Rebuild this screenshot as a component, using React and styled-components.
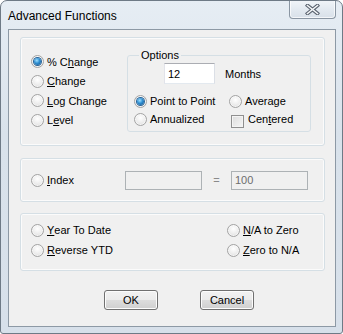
import React from 'react';
import styled, { createGlobalStyle } from 'styled-components';

const GlobalStyle = createGlobalStyle`
  html, body {
    margin: 0;
    padding: 0;
    background: #ffffff;
  }
  * {
    box-sizing: border-box;
  }
`;

const Window = styled.div`
  width: 343px;
  height: 334px;
  display: flex;
  flex-direction: column;
  border: 1px solid #6e7a86;
  border-radius: 7px 7px 3px 3px;
  background: linear-gradient(#e6edf4, #d9e2eb 40%, #d7e0ea);
  font-family: "Liberation Sans", Arial, sans-serif;
  font-size: 11px;
  color: #000;
  overflow: hidden;
`;

const TitleBar = styled.div`
  height: 28px;
  display: flex;
  align-items: flex-start;
  justify-content: space-between;
  padding-right: 6px;
`;

const Title = styled.div`
  font-family: "Liberation Sans", Arial, sans-serif;
  font-size: 12px;
  line-height: 14px;
  padding: 8px 0 0 7px;
  color: #000;
`;

const CloseButton = styled.div`
  width: 47px;
  height: 19px;
  margin-top: -1px;
  display: flex;
  align-items: center;
  justify-content: center;
  border: 1px solid #8a96a3;
  border-top: none;
  border-radius: 0 0 4px 4px;
  background: linear-gradient(#f1f5f9, #e2e9f0 55%, #d8e0e9);
  box-shadow: inset 0 0 0 1px rgba(255, 255, 255, 0.7);
`;

const Client = styled.div`
  flex: 1;
  margin: 0 6px 6px 7px;
  border: 1px solid #8d99a5;
  background: #f0f0f0;
  padding: 7px 10px 0 11px;
  display: flex;
  flex-direction: column;
`;

const Group = styled.div`
  height: ${(p) => p.$h}px;
  margin-top: ${(p) => p.$mt || 0}px;
  border: 1px solid #d5dfe5;
  border-radius: 3px;
  box-shadow: inset 0 0 0 1px #fbfbfb;
`;

const MainGroup = styled(Group)`
  display: flex;
  align-items: flex-start;
  padding: 0 13px 0 10px;
`;

const RadioColumn = styled.div`
  display: flex;
  flex-direction: column;
  padding-top: 14px;
`;

const Row = styled.label`
  display: flex;
  align-items: center;
  height: ${(p) => p.$h || 19.5}px;
  white-space: nowrap;
`;

const Radio = styled.span`
  position: relative;
  width: 13px;
  height: 13px;
  flex: none;
  border-radius: 50%;
  border: 1px solid #a3a3a3;
  background: radial-gradient(circle at 50% 35%, #ffffff, #eeeeee 50%, #d6d6d6 100%);
  box-shadow: inset 0 0 0 1px rgba(255, 255, 255, 0.6);
  margin-right: 3px;

  &::after {
    content: '';
    display: ${(p) => (p.$checked ? 'block' : 'none')};
    position: absolute;
    left: 2px;
    top: 2px;
    width: 7px;
    height: 7px;
    border-radius: 50%;
    background: radial-gradient(circle at 40% 35%, #9fe0ff, #2f8fd2 45%, #0e4d88 100%);
    box-shadow: 0 0 0 1px #2a6497;
  }
`;

const Check = styled.span`
  width: 13px;
  height: 13px;
  flex: none;
  border: 1px solid #8f8f8f;
  background: linear-gradient(135deg, #dcdcdc, #f6f6f6);
  box-shadow: inset 0 0 0 1px #f4f4f4;
  margin: 4px 4px 0 2px;
`;

const Options = styled.fieldset`
  width: 184px;
  height: 84px;
  margin: 10px 0 0 auto;
  padding: 1px 6px 0 6px;
  border: 1px solid #d5dfe5;
  border-radius: 3px;
  min-width: 0;
`;

const Legend = styled.legend`
  padding: 0 2px;
  margin-left: 5px;
  line-height: 14px;
  font-size: 11px;
`;

const MonthsRow = styled.div`
  display: flex;
  align-items: center;
  padding-left: 30px;
  height: 21px;
  margin-bottom: 8px;
`;

const TextBox = styled.div`
  width: ${(p) => p.$w}px;
  height: ${(p) => p.$ht}px;
  display: flex;
  align-items: center;
  padding-left: 3px;
  border: 1px solid #abadb3;
  border-color: #abadb3 #dbdfe6 #e3e9ef #e2e3ea;
  background: ${(p) => (p.$disabled ? '#f0f0f0' : '#ffffff')};
  color: ${(p) => (p.$disabled ? '#6d6d6d' : '#000')};
  ${(p) => p.$disabled && 'border-color: #adb2b5;'}
`;

const Caption = styled.span`
  margin-left: 10px;
`;

const OptGrid = styled.div`
  display: grid;
  grid-template-columns: 95px 1fr;
`;

const IndexGroup = styled(Group)`
  display: flex;
  align-items: center;
  padding-left: 10px;
`;

const IndexLabel = styled(Row)`
  width: 94px;
`;

const Equals = styled.span`
  width: 29px;
  text-align: center;
  color: #8a8a8a;
`;

const ConvGroup = styled(Group)`
  display: grid;
  grid-template-columns: 196px 1fr;
  grid-auto-rows: 20px;
  padding: 6px 0 0 10px;
`;

const ButtonBar = styled.div`
  display: flex;
  gap: 42px;
  padding-left: 84px;
  margin-top: 19px;
`;

const Button = styled.div`
  width: 54px;
  height: 20px;
  display: flex;
  align-items: center;
  justify-content: center;
  border: 1px solid #707070;
  border-radius: 3px;
  background: linear-gradient(#f2f2f2, #ebebeb 50%, #dddddd 51%, #cfcfcf);
  box-shadow: inset 0 0 0 1px #fcfcfc;
`;

const Key = styled.u`
  text-decoration: underline;
  text-underline-offset: 1px;
`;

const CloseGlyph = () => (
  <svg width="15" height="11" viewBox="0 0 15 11">
    <path d="M2.5 1.5 L12.5 9.5 M12.5 1.5 L2.5 9.5" stroke="#5b6470" strokeWidth="3.6" strokeLinecap="square" />
    <path d="M2.5 1.5 L12.5 9.5 M12.5 1.5 L2.5 9.5" stroke="#f4f6f8" strokeWidth="1.6" strokeLinecap="square" />
  </svg>
);

const App = () => (
  <>
    <GlobalStyle />
    <Window>
      <TitleBar>
        <Title>Advanced Functions</Title>
        <CloseButton>
          <CloseGlyph />
        </CloseButton>
      </TitleBar>
      <Client>
        <MainGroup $h={109}>
          <RadioColumn>
            <Row><Radio $checked />% C<Key>h</Key>ange</Row>
            <Row><Radio /><Key>C</Key>hange</Row>
            <Row><Radio /><Key>L</Key>og Change</Row>
            <Row><Radio />L<Key>e</Key>vel</Row>
          </RadioColumn>
          <Options>
            <Legend>Options</Legend>
            <MonthsRow>
              <TextBox $w={51} $ht={21}>12</TextBox>
              <Caption>Months</Caption>
            </MonthsRow>
            <OptGrid>
              <Row $h={18}><Radio $checked />Point to Point</Row>
              <Row $h={18}><Radio />Average</Row>
              <Row $h={18}><Radio />Annualized</Row>
              <Row $h={18}><Check />Cen<Key>t</Key>ered</Row>
            </OptGrid>
          </Options>
        </MainGroup>

        <IndexGroup $h={44} $mt={12}>
          <IndexLabel><Radio /><Key>I</Key>ndex</IndexLabel>
          <TextBox $w={77} $ht={19} $disabled />
          <Equals>=</Equals>
          <TextBox $w={77} $ht={19} $disabled>100</TextBox>
        </IndexGroup>

        <ConvGroup $h={58} $mt={11}>
          <Row $h={20}><Radio /><Key>Y</Key>ear To Date</Row>
          <Row $h={20}><Radio /><Key>N</Key>/A to Zero</Row>
          <Row $h={20}><Radio /><Key>R</Key>everse YTD</Row>
          <Row $h={20}><Radio /><Key>Z</Key>ero to N/A</Row>
        </ConvGroup>

        <ButtonBar>
          <Button>OK</Button>
          <Button>Cancel</Button>
        </ButtonBar>
      </Client>
    </Window>
  </>
);

export default App;
